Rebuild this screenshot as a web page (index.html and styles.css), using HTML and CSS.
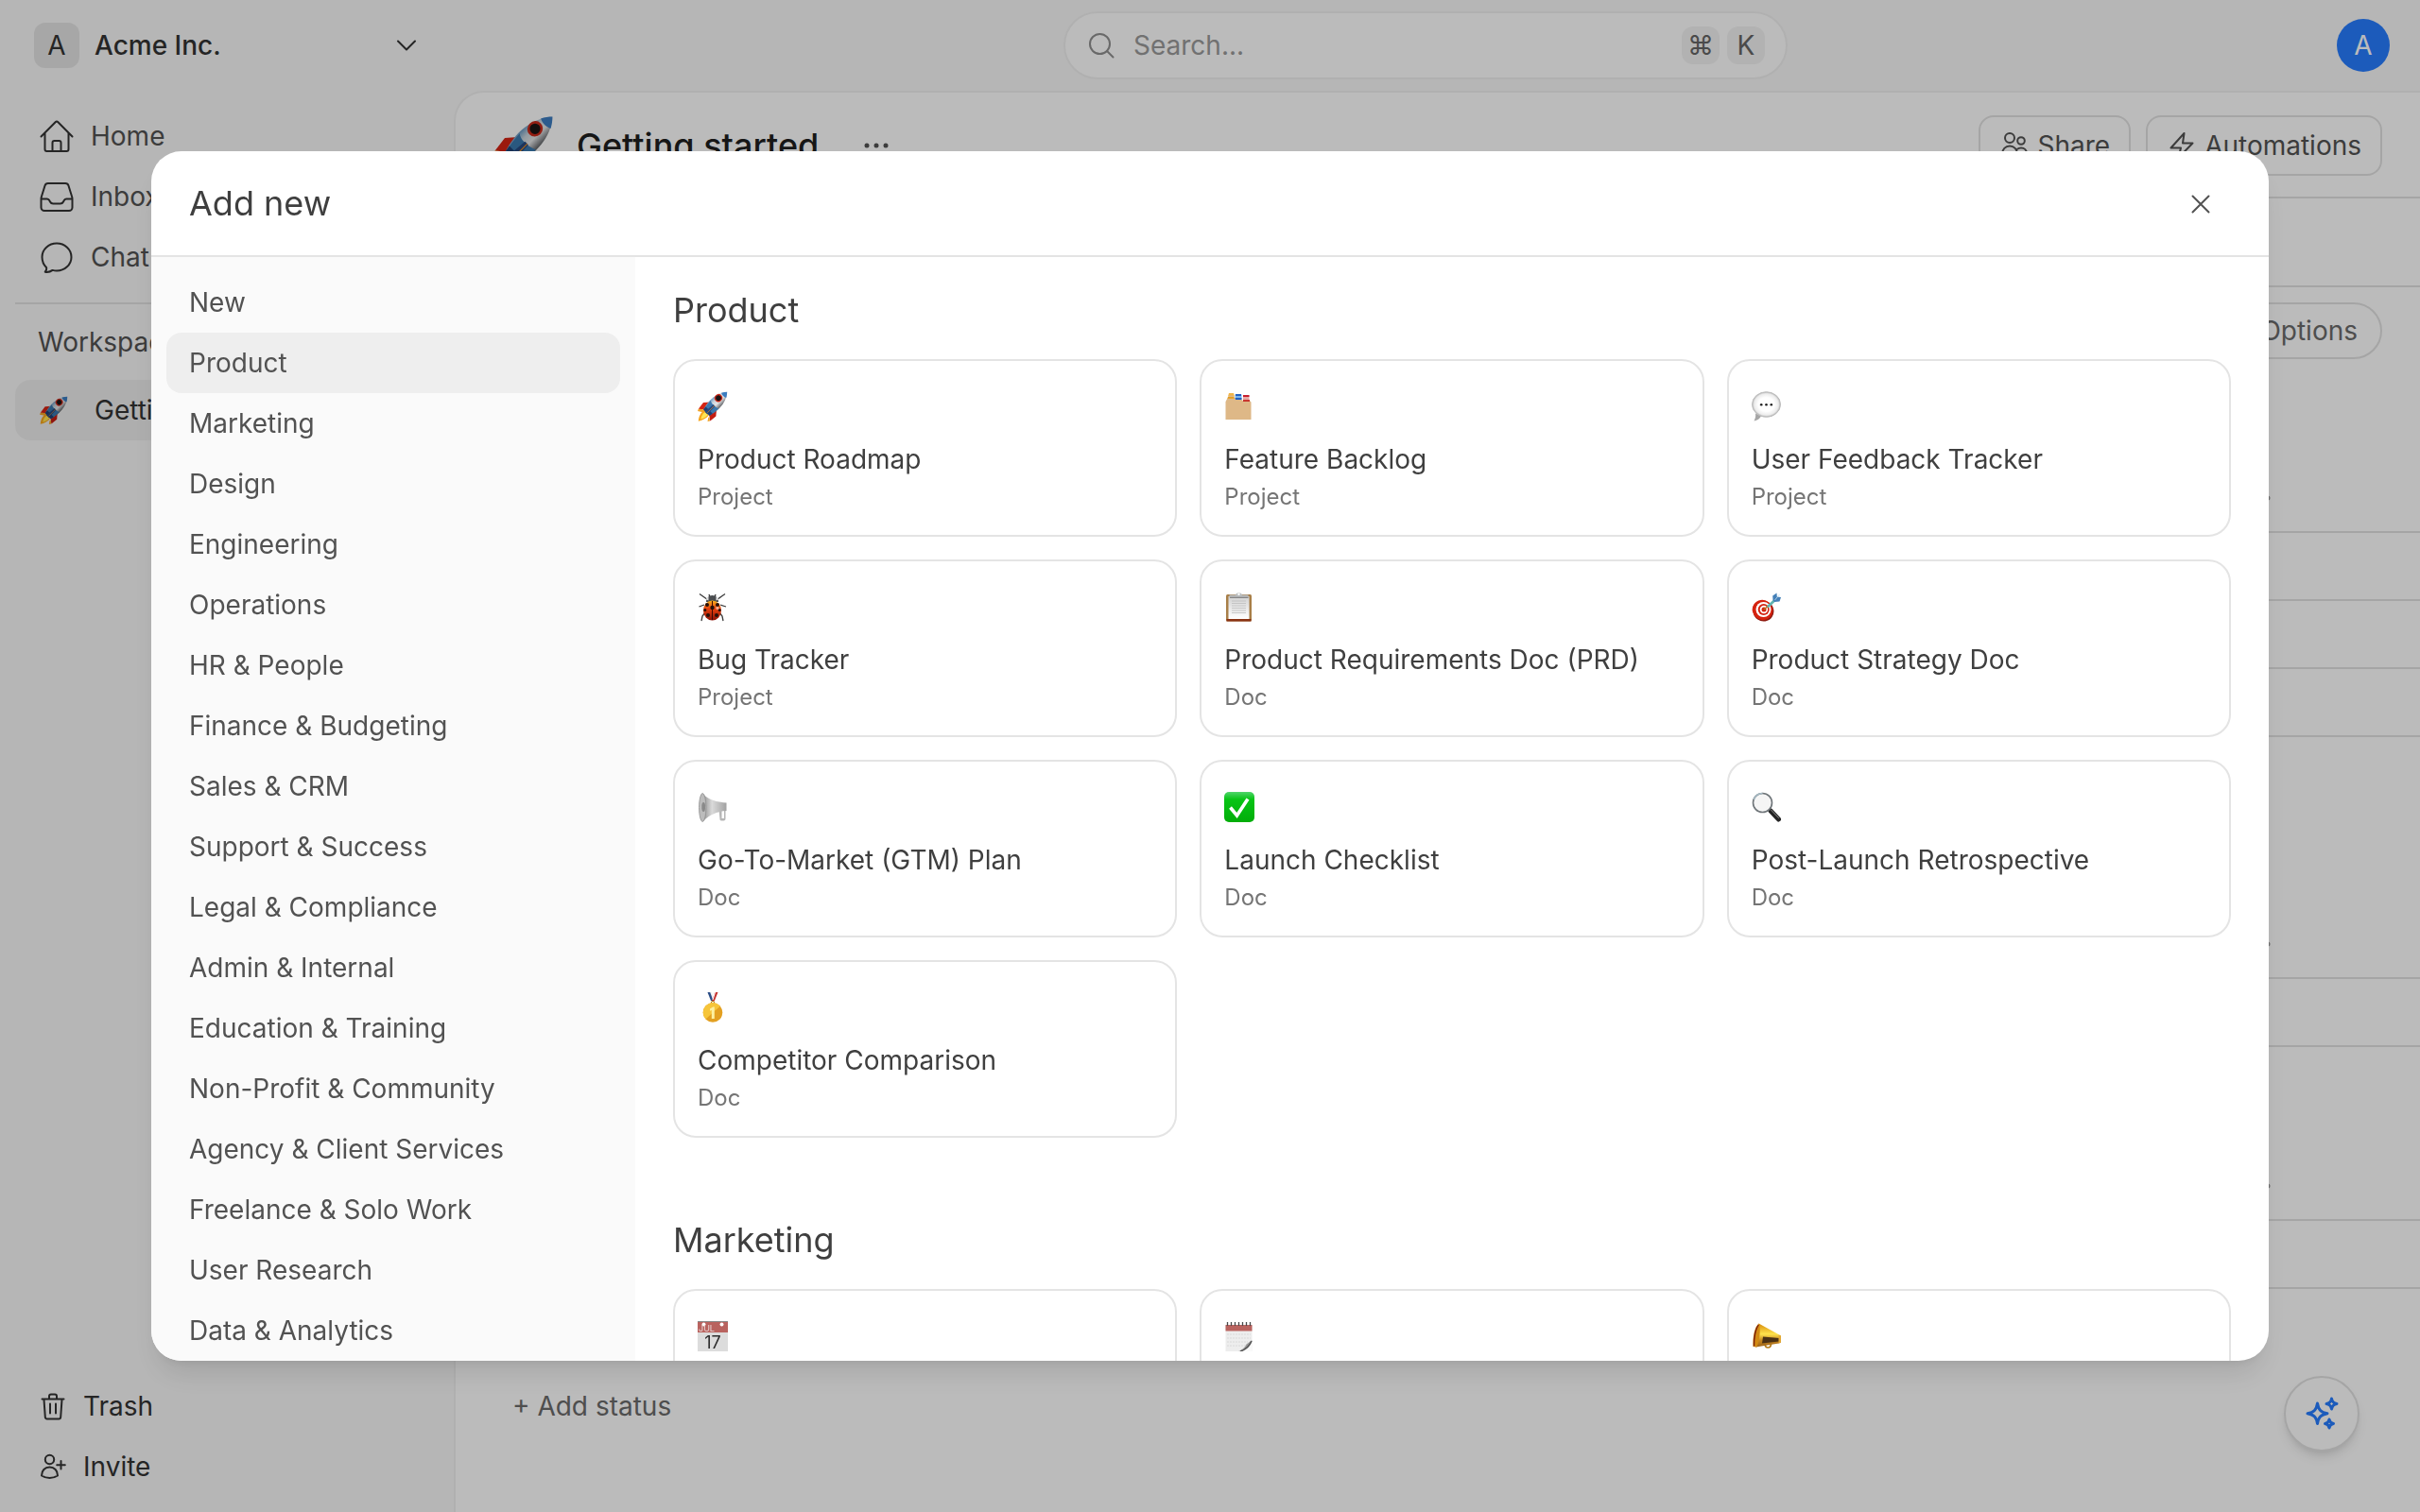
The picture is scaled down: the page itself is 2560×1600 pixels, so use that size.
FILE: index.html
```html
<!DOCTYPE html>
<html lang="en">
<head>
<meta charset="utf-8">
<title>Getting started</title>
<link rel="stylesheet" href="styles.css">
</head>
<body>
<svg class="defs" aria-hidden="true">
  <defs>
    <linearGradient id="g-hull" x1="0" y1="0" x2="1" y2="0"><stop offset="0" stop-color="#6d9cc4"/><stop offset=".3" stop-color="#c9d4dc"/><stop offset=".6" stop-color="#e4e6e8"/><stop offset="1" stop-color="#5d6064"/></linearGradient>
    <radialGradient id="g-bubble"><stop offset=".55" stop-color="#fff"/><stop offset=".85" stop-color="#ececec"/><stop offset="1" stop-color="#b4b4b4"/></radialGradient>
    <linearGradient id="g-bug" x1="0" y1="0" x2="0" y2="1"><stop offset="0" stop-color="#f6b51e"/><stop offset=".4" stop-color="#e8420f"/><stop offset="1" stop-color="#8c1207"/></linearGradient>
    <linearGradient id="g-horn" x1="0" y1="0" x2="1" y2="0"><stop offset="0" stop-color="#8d8d8d"/><stop offset=".4" stop-color="#dadada"/><stop offset="1" stop-color="#a2a2a2"/></linearGradient>
    <linearGradient id="g-green" x1="0" y1="0" x2="0" y2="1"><stop offset="0" stop-color="#4fd46a"/><stop offset=".25" stop-color="#07c415"/><stop offset="1" stop-color="#02ad0a"/></linearGradient>
    <linearGradient id="g-gold" x1="0" y1="0" x2="0" y2="1"><stop offset="0" stop-color="#d78b0a"/><stop offset=".45" stop-color="#ffe34d"/><stop offset=".7" stop-color="#c98b22"/><stop offset="1" stop-color="#9a5f16"/></linearGradient>
    <linearGradient id="g-paper" x1="0" y1="0" x2="0" y2="1"><stop offset="0" stop-color="#d2d2d2"/><stop offset="1" stop-color="#fff"/></linearGradient>

    <symbol id="e-rocket" viewBox="0 0 32 32">
      <path d="M13 11.500 6 12 .8 18.800l8 .7z" fill="#d42414"/>
      <path d="M.8 18.800l8 .7-2 3L0 21z" fill="#f0a429"/>
      <path d="M20 19l-.6 7.500-6.200 5-1.200-8z" fill="#c41d12"/>
      <path d="M12.500 27l.5 4.500-2.500.5.7-4z" fill="#f0a429"/>
      <path d="M7.500 20C3.500 22 1 26.500.8 31.700c4.500-.9 9-3.200 11.200-6.700z" fill="#f7a51c"/>
      <path d="M8 22c-2.500 1.500-4 4-4.500 7.500 3-.8 6-2.500 7.500-4.800z" fill="#ffe553"/>
      <g transform="rotate(45 16 16)">
        <path d="M11.500 25c-3.500-10-3-22 4.500-30.500C23.500 3 23.500 15 20.500 25z" fill="url(#g-hull)"/>
        <path d="M12.300-.5c1-1.900 2.200-3.500 3.700-5 1.500 1.500 2.700 3.100 3.700 5-2.300 1.200-5.100 1.200-7.400 0z" fill="#3c7dc0"/>
        <path d="M10 13c2 2 8 2 12.200 0-.1 4-.7 8-1.700 12h-9C10.700 21 10.100 17 10 13z" fill="#3a78ae"/>
        <path d="M10.800 21.500h10.500l-.8 4h-9z" fill="#1f4073"/>
        <path d="M15 14h2.500l.5 12h-4z" fill="#27497f"/>
        <path d="M16.700 14v11" stroke="#e08a26" stroke-width=".6"/>
        <ellipse cx="14" cy="5.500" rx="4" ry="4.200" fill="#c92a1b"/>
        <circle cx="14" cy="5.500" r="2.800" fill="#1c1414"/>
      </g>
    </symbol>

    <symbol id="e-dividers" viewBox="0 0 32 32">
      <path d="M4 5.500 5 2h5l1 3.500z" fill="#f1b548"/><path d="M11.500 3.500h7V9h-7z" fill="#7db5ea"/><path d="M12 3h6v2h-6zM11.500 7h7v2h-7z" fill="#2161c4"/>
      <path d="M20 4.500h6.500V10H20z" fill="#e8a8a4"/><path d="M20 4h6.500v2H20z" fill="#c81f2e"/>
      <path d="M1.500 11 5 4.500h5L11.500 8H18l1.500 2H27l1.500 1.500V30h-27z" fill="#deb887"/>
      <path d="M4 6h6l.8 1.800H3.500z" fill="#e59c1d"/><path d="M12 7.500h6V9h-6z" fill="#2161c4"/><path d="M20 9h7v2h-7z" fill="#c9362f"/>
    </symbol>

    <symbol id="e-bubble" viewBox="0 0 32 32">
      <path d="M4 23.500c.5 3-.2 5.500-1.500 8 3.700-.6 6-2.500 7.500-5.300z" fill="#a6a6a6"/>
      <ellipse cx="15.500" cy="14" rx="15" ry="13.300" fill="url(#g-bubble)" stroke="#bdbdbd" stroke-width="1"/>
      <circle cx="10.200" cy="14.300" r="1.300" fill="#222"/><circle cx="15.500" cy="14.300" r="1.300" fill="#222"/><circle cx="20.800" cy="14.300" r="1.300" fill="#222"/>
    </symbol>

    <symbol id="e-bug" viewBox="0 0 32 32">
      <path d="M10.500 8.500 2 2.500M20.500 8.500l8.500-6M7 14l-5.500 2M24 14l6 2M8 22l-3 4-1 5M23 22l3 4 1 5M12 3l1 3M19 3l-1 3" fill="none" stroke="#3a3a3a" stroke-width="1.300"/>
      <path d="M9 11c0-4 2.500-7 6.500-7S22 7 22 11z" fill="#4a4d50"/>
      <path d="M9 8.500c.3-1.700 1.200-2.600 2.500-3v4zM22 8.500c-.3-1.700-1.200-2.600-2.500-3v4z" fill="#e2e2e2"/>
      <ellipse cx="15.500" cy="20" rx="9.500" ry="10.500" fill="url(#g-bug)"/>
      <path d="M15.500 10v20" stroke="#3d0905" stroke-width="1"/>
      <g fill="#26100b"><circle cx="15.500" cy="17" r="2.200"/><circle cx="10" cy="14" r="2"/><circle cx="21" cy="14" r="2"/><circle cx="7.800" cy="19.500" r="1.500"/><circle cx="23.200" cy="19.500" r="1.500"/><circle cx="11" cy="25" r="2"/><circle cx="20" cy="25" r="2"/></g>
      <circle cx="21" cy="17.500" r="1.700" fill="#f4a98d"/>
    </symbol>

    <symbol id="e-clipboard" viewBox="0 0 32 32">
      <rect x="2" y="3" width="27" height="28.500" rx="1.500" fill="#a87f48"/>
      <path d="M2.500 29h26v2.500h-26z" fill="#8a3313"/>
      <path d="M4.500 5h22v24h-22z" fill="url(#g-paper)"/>
      <path d="M8 10h15M8 12.500h15M8 15h15M8 17.500h15M8 20h15M8 22.500h15" stroke="#bdbdbd" stroke-width=".8"/>
      <path d="M5.500 3.500H12c1-3 6-3 7 0h6.500v3.300h-20z" fill="#b9bcbd"/><path d="M6 6.300h19.500" stroke="#777" stroke-width="1"/>
      <circle cx="15.500" cy="2.800" r="1.200" fill="#fff"/>
    </symbol>

    <symbol id="e-dart" viewBox="0 0 32 32">
      <ellipse cx="12.500" cy="20.700" rx="11" ry="10.800" transform="rotate(35 12.500 20.700)" fill="#8d1a10"/>
      <ellipse cx="11.500" cy="19.500" rx="11" ry="10.500" transform="rotate(35 11.500 19.500)" fill="#d5220f"/>
      <circle cx="12.500" cy="19" r="8" fill="#fff"/><circle cx="12.700" cy="19" r="6" fill="#d5220f"/><circle cx="12.900" cy="19" r="4.200" fill="#fff"/><circle cx="13" cy="19" r="2.500" fill="#d5220f"/>
      <path d="M13 19l5-4.500" stroke="#b07b1c" stroke-width="1.400"/>
      <path d="M16 15.200 23 8.500l2.200 1.800-7.400 7z" fill="#5fb3b0"/>
      <path d="M22.500 9l-.3-4.500L26.500 1.500l.3 4 4.200.5-1.500 4.500-5.500.5z" fill="#4580b8"/><path d="M24.500 9l5-6" stroke="#bfe0f2" stroke-width=".8"/>
    </symbol>

    <symbol id="e-speaker" viewBox="0 0 32 32">
      <path d="M22 13h7.500v15.500c0 1-.8 2-2 2H25c-1 0-1.500-.7-1.500-1.700z" fill="#b6b6b6"/><path d="M25.500 20H28v8h-2.500z" fill="#fff"/>
      <path d="M5 1.500C11 8 20 11 30.500 11.500v8.500C20 20.500 11 25 5.500 31.500z" fill="url(#g-horn)"/>
      <ellipse cx="5.200" cy="16.500" rx="3.700" ry="15" fill="#bcbcbc" stroke="#909090" stroke-width=".8"/><ellipse cx="6.200" cy="16" rx="1.900" ry="5" fill="#8a8a8a"/>
    </symbol>

    <symbol id="e-check" viewBox="0 0 32 32">
      <rect x="0" y="0" width="32" height="32" rx="5" fill="url(#g-green)"/>
      <path d="M6.500 16.500 13.500 25 25 7.500" fill="none" stroke="#fff" stroke-width="3.600"/>
    </symbol>

    <symbol id="e-lens" viewBox="0 0 32 32">
      <path d="M20 20l8.500 9" stroke="#242424" stroke-width="5" stroke-linecap="round"/><path d="M20.500 19l8 8.500" stroke="#8a8a8a" stroke-width="1" stroke-linecap="round"/>
      <circle cx="11.500" cy="11.500" r="10" fill="#f5f5f5" stroke="#6f7579" stroke-width="1.600"/><path d="M2.500 8a9.500 9.500 0 0 1 9-6.500" fill="none" stroke="#a8bcc6" stroke-width="1.600"/>
    </symbol>

    <symbol id="e-medal" viewBox="0 0 32 32">
      <path d="M10.500 0h3.500l3 9h-3z" fill="#2b4d86"/><path d="M13.200 0h1.800l3 8-1.500 1z" fill="#f1f1f1"/><path d="M21.500 0H18l-3 9.500h2.700z" fill="#c63330"/><path d="M19 0h-1.200l-2.300 8h1z" fill="#fff"/>
      <circle cx="16" cy="11" r="1.600" fill="none" stroke="#b27b10" stroke-width="1"/>
      <circle cx="16" cy="21.500" r="10.300" fill="#e3a021"/><path d="M8 15a10.300 10.300 0 0 1 16-.2L16 21.500 8.500 28.500A10.300 10.300 0 0 1 8 15z" fill="#f6c53a"/>
      <path d="M13 17.500l3.200-2h1.600V28h-3V19l-1.800.8z" fill="#fdf0a1"/>
    </symbol>

    <symbol id="e-spiral" viewBox="0 0 32 32">
      <path d="M1.500 4h28v28h-28z" fill="#ededed"/><path d="M1.500 4h28v6.500h-28z" fill="#b9635f"/>
      <path d="M3 14h25M3 18h25M3 22h22M3 26h20" stroke="#d9d9d9" stroke-width="1" stroke-dasharray="2 1"/>
      <path d="M3.500 1v4M7.500 1v4M11.500 1v4M15.500 1v4M19.500 1v4M23.500 1v4M27.500 1v4" stroke="#4b4b4b" stroke-width="1.300"/>
      <path d="M29.500 20c-2 6-7 11-14.500 12 4-1.500 7-4 8.500-7.500z" fill="#9a9a9a"/><path d="M29.500 21v11H17c7-2 11-6 12.500-11z" fill="#fafafa"/><path d="M29 21c-2 5-6 9-12 11" fill="none" stroke="#555" stroke-width="1.600"/>
    </symbol>

    <symbol id="e-horn" viewBox="0 0 32 32">
      <path d="M14 23.500c0 6 6.500 6 6.500 0" fill="none" stroke="#b57a16" stroke-width="1.700"/>
      <path d="M7.500 2.500 31 15.500v7l-2 1L4 27.500z" fill="url(#g-gold)"/>
      <path d="M12 16.500 29 18v3.500l-18 2z" fill="#4a3014"/>
      <path d="M8 2.500C3 5 .8 18 1.500 27l4 .5C8.500 20 9.500 10 8 2.500z" fill="#d28a14"/><path d="M7.300 4C4 8 2.300 18 2.500 26.500" fill="none" stroke="#7c1f0c" stroke-width="1.300"/>
      <path d="M28.500 14.500l2.500 1v7l-2.500 1z" fill="#e3a936"/>
    </symbol>
  </defs>
</svg>

<div class="app">
  <header class="topbar">
    <button class="org" type="button">
      <span class="org-badge">A</span>
      <span class="org-name">Acme Inc.</span>
      <svg class="chevron" viewBox="0 0 28 28"><path d="M5 9.500 14 18.500 23 9.500"/></svg>
    </button>
    <div class="topbar-main">
      <label class="search">
        <svg class="search-icon" viewBox="0 0 28 28"><circle cx="12.500" cy="12.500" r="10.500"/><path d="M20 20l6.500 6.500"/></svg>
        <input type="search" placeholder="Search..." aria-label="Search">
        <kbd>⌘</kbd><kbd>K</kbd>
      </label>
      <button class="avatar" type="button">A</button>
    </div>
  </header>

  <div class="body">
    <aside class="sidebar">
      <nav class="nav">
        <a class="nav-item" href="#home"><svg class="icon" viewBox="0 0 40 40"><path d="M3.500 20.500 18.600 5.200a2 2 0 0 1 2.800 0L36.500 20.500M7.500 17v17a2 2 0 0 0 2 2h21a2 2 0 0 0 2-2V17M15.500 36v-9a2 2 0 0 1 2-2h5a2 2 0 0 1 2 2v9"/></svg>Home</a>
        <a class="nav-item" href="#inbox"><svg class="icon" viewBox="0 0 40 40"><path d="M3.500 22.500h6.200c1 0 1.800.5 2.300 1.300l1 1.700c.6 1.200 1.800 2 3.200 2h7.600c1.400 0 2.600-.8 3.200-2l1-1.700c.5-.8 1.300-1.300 2.300-1.300h6.200M3.500 22.500v9a3.500 3.500 0 0 0 3.500 3.500h26a3.500 3.500 0 0 0 3.500-3.500v-9c0-1-.2-1.800-.5-2.700L32.500 8.500A3.500 3.500 0 0 0 29.200 6H10.800a3.500 3.500 0 0 0-3.300 2.500L4 19.800c-.3.900-.5 1.700-.5 2.700z"/></svg>Inbox</a>
        <a class="nav-item" href="#chat"><svg class="icon" viewBox="0 0 40 40"><path d="M20 5.500c8.500 0 15.500 6.300 15.500 14.500S28.500 34.500 20 34.500c-1.600 0-3-.2-4.400-.6-2 1.500-5 2.300-7.900 1.800 1.200-1.300 1.800-2.900 1.500-4.500-2.900-2.800-4.700-6.700-4.700-11.200 0-8.200 7-14.500 15.500-14.500z"/></svg>Chat</a>
      </nav>
      <h2 class="side-heading">Workspaces</h2>
      <a class="nav-item space is-active" href="#getting-started"><svg class="emoji" viewBox="0 0 32 32"><use href="#e-rocket"/></svg>Getting started</a>
      <div class="side-foot">
        <a class="nav-item foot" href="#trash"><svg class="icon" viewBox="0 0 32 32"><path d="M4.500 8.500h23M12 8V5.500a2 2 0 0 1 2-2h4a2 2 0 0 1 2 2V8M6.500 9l1.300 18.500a2 2 0 0 0 2 1.900h12.400a2 2 0 0 0 2-1.900L25.500 9M13 13.500v10M19 13.500v10"/></svg>Trash</a>
        <a class="nav-item foot" href="#invite"><svg class="icon" viewBox="0 0 32 32"><circle cx="12.500" cy="8.500" r="4.700"/><path d="M12.500 16.500c-5 0-8.500 3.800-8.500 9 2.500 1.700 5.500 2.500 8.500 2.500s6-.8 8.500-2.500c0-5.200-3.500-9-8.500-9zM24.500 10v8.500M20.200 14.200h8.600"/></svg>Invite</a>
      </div>
    </aside>

    <main class="page">
      <div class="page-head">
        <svg class="page-emoji" viewBox="0 0 32 32"><use href="#e-rocket"/></svg>
        <h1>Getting started</h1>
        <button class="more" type="button" aria-label="More"><svg viewBox="0 0 26 6"><circle cx="3" cy="3" r="2.500"/><circle cx="13" cy="3" r="2.500"/><circle cx="23" cy="3" r="2.500"/></svg></button>
        <div class="page-actions">
          <button class="btn" type="button"><svg class="icon" viewBox="0 0 32 32"><circle cx="11" cy="8" r="5"/><circle cx="23" cy="11" r="3.800"/><path d="M3 25c0-5 3.500-8.500 8-8.500s8 3.500 8 8.500c-2.400 1.500-5.200 2.300-8 2.300S5.400 26.500 3 25zM19 19.800c1-.8 2.400-1.300 4-1.300 3.500 0 6 2.500 6 6-2 1.200-4.500 1.700-7 1.500"/></svg>Share</button>
          <button class="btn" type="button"><svg class="icon" viewBox="0 0 32 32"><path d="M18.500 3 4.500 18.500H15L12.500 29 27.500 13.500H17z"/></svg>Automations</button>
        </div>
      </div>
      <div class="tabs"></div>
      <div class="tools"><button class="pill" type="button">Options</button></div>
      <div class="groups">
        <section class="group">
          <div class="group-head"><svg viewBox="0 0 26 6"><circle cx="3" cy="3" r="2.500"/><circle cx="13" cy="3" r="2.500"/><circle cx="23" cy="3" r="2.500"/></svg></div>
          <div class="task"></div><div class="task"></div><div class="task"></div><div class="task blank"></div>
        </section>
        <section class="group">
          <div class="group-head"><svg viewBox="0 0 26 6"><circle cx="3" cy="3" r="2.500"/><circle cx="13" cy="3" r="2.500"/><circle cx="23" cy="3" r="2.500"/></svg></div>
          <div class="task"></div>
        </section>
        <section class="group">
          <div class="group-head"><svg viewBox="0 0 26 6"><circle cx="3" cy="3" r="2.500"/><circle cx="13" cy="3" r="2.500"/><circle cx="23" cy="3" r="2.500"/></svg></div>
          <div class="task"></div>
        </section>
      </div>
      <button class="add-status" type="button">+ Add status</button>
    </main>
  </div>

  <button class="assistant" type="button" aria-label="Assistant">
    <svg viewBox="0 0 40 40"><path d="M15.500 9c1.200 7 3.500 9.500 10.500 10.800-7 1.300-9.300 3.700-10.500 10.700C14.300 23.500 12 21.100 5 19.800 12 18.500 14.300 16 15.500 9zM30.500 4c.6 3.600 1.900 4.900 5.500 5.500-3.600.6-4.900 1.900-5.500 5.500-.6-3.600-1.900-4.900-5.500-5.500 3.600-.6 4.900-1.900 5.500-5.500zM28 26c.5 2.900 1.600 4 4.500 4.500-2.900.5-4 1.600-4.500 4.500-.5-2.900-1.600-4-4.500-4.500 2.900-.5 4-1.600 4.500-4.500z"/></svg>
  </button>
</div>

<div class="overlay">
  <div class="modal" role="dialog" aria-modal="true" aria-labelledby="modal-title">
    <header class="modal-head">
      <h2 id="modal-title">Add new</h2>
      <button class="close" type="button" aria-label="Close"><svg viewBox="0 0 32 32"><path d="M7.500 8.500l17 17M24.500 8.500l-17 17"/></svg></button>
    </header>
    <div class="modal-body">
      <nav class="cats">
        <a href="#new">New</a>
        <a class="is-active" href="#product">Product</a>
        <a href="#marketing">Marketing</a>
        <a href="#design">Design</a>
        <a href="#engineering">Engineering</a>
        <a href="#operations">Operations</a>
        <a href="#hr">HR &amp; People</a>
        <a href="#finance">Finance &amp; Budgeting</a>
        <a href="#sales">Sales &amp; CRM</a>
        <a href="#support">Support &amp; Success</a>
        <a href="#legal">Legal &amp; Compliance</a>
        <a href="#admin">Admin &amp; Internal</a>
        <a href="#education">Education &amp; Training</a>
        <a href="#nonprofit">Non-Profit &amp; Community</a>
        <a href="#agency">Agency &amp; Client Services</a>
        <a href="#freelance">Freelance &amp; Solo Work</a>
        <a href="#research">User Research</a>
        <a href="#data">Data &amp; Analytics</a>
      </nav>
      <div class="templates">
        <section class="set">
          <h3>Product</h3>
          <div class="cards">
            <button class="card" type="button"><svg class="emoji" viewBox="0 0 32 32"><use href="#e-rocket"/></svg><span class="name">Product Roadmap</span><span class="kind">Project</span></button>
            <button class="card" type="button"><svg class="emoji" viewBox="0 0 32 32"><use href="#e-dividers"/></svg><span class="name">Feature Backlog</span><span class="kind">Project</span></button>
            <button class="card" type="button"><svg class="emoji" viewBox="0 0 32 32"><use href="#e-bubble"/></svg><span class="name">User Feedback Tracker</span><span class="kind">Project</span></button>
            <button class="card" type="button"><svg class="emoji" viewBox="0 0 32 32"><use href="#e-bug"/></svg><span class="name">Bug Tracker</span><span class="kind">Project</span></button>
            <button class="card" type="button"><svg class="emoji" viewBox="0 0 32 32"><use href="#e-clipboard"/></svg><span class="name">Product Requirements Doc (PRD)</span><span class="kind">Doc</span></button>
            <button class="card" type="button"><svg class="emoji" viewBox="0 0 32 32"><use href="#e-dart"/></svg><span class="name">Product Strategy Doc</span><span class="kind">Doc</span></button>
            <button class="card" type="button"><svg class="emoji" viewBox="0 0 32 32"><use href="#e-speaker"/></svg><span class="name">Go-To-Market (GTM) Plan</span><span class="kind">Doc</span></button>
            <button class="card" type="button"><svg class="emoji" viewBox="0 0 32 32"><use href="#e-check"/></svg><span class="name">Launch Checklist</span><span class="kind">Doc</span></button>
            <button class="card" type="button"><svg class="emoji" viewBox="0 0 32 32"><use href="#e-lens"/></svg><span class="name">Post-Launch Retrospective</span><span class="kind">Doc</span></button>
            <button class="card" type="button"><svg class="emoji" viewBox="0 0 32 32"><use href="#e-medal"/></svg><span class="name">Competitor Comparison</span><span class="kind">Doc</span></button>
          </div>
        </section>
        <section class="set">
          <h3>Marketing</h3>
          <div class="cards">
            <button class="card" type="button" aria-label="Calendar">
              <svg class="emoji" viewBox="0 0 32 32"><path d="M0 0h32v32H0z" fill="#dcdcdc"/><path d="M0 0h32v12H0z" fill="#b9635f"/><path d="M0 .500h32" stroke="#888" stroke-width="1"/><circle cx="6.500" cy="3.500" r="2" fill="#fff"/><circle cx="25.500" cy="3.500" r="2" fill="#fff"/><text class="cal-month" x="1" y="11">JUL</text><text class="cal-day" x="16" y="29" text-anchor="middle">17</text></svg>
            </button>
            <button class="card" type="button" aria-label="Planner"><svg class="emoji" viewBox="0 0 32 32"><use href="#e-spiral"/></svg></button>
            <button class="card" type="button" aria-label="Campaign"><svg class="emoji" viewBox="0 0 32 32"><use href="#e-horn"/></svg></button>
          </div>
        </section>
      </div>
    </div>
  </div>
</div>
</body>
</html>
```
FILE: styles.css
```css
* { box-sizing: border-box; }

body {
  margin: 0;
  font: 400 28px/40px Inter, "Liberation Sans", sans-serif;
  color: #525252;
  background: #f8f8f8;
}

h1, h2, h3 { margin: 0; font-weight: 400; }

button, input {
  font: inherit;
  color: inherit;
  background: none;
  border: 0;
  padding: 0;
  margin: 0;
}

a { color: inherit; text-decoration: none; }

.defs { position: absolute; width: 0; height: 0; }

.icon, .chevron, .search-icon, .close svg {
  fill: none;
  stroke: currentColor;
  stroke-width: 2;
  stroke-linecap: round;
  stroke-linejoin: round;
  flex: none;
}

.emoji { width: 32px; height: 32px; flex: none; display: block; }

.app {
  height: 100vh;
  display: flex;
  flex-direction: column;
  overflow: hidden;
}

/* Top bar */
.topbar { display: flex; flex: none; height: 96px; }

.org {
  width: 480px;
  display: flex;
  align-items: center;
  gap: 16px;
  padding: 0 36px;
  color: #333;
  text-align: left;
}
.org-badge {
  width: 48px;
  height: 48px;
  line-height: 48px;
  border-radius: 12px;
  background: #e4e4e4;
  text-align: center;
}
.org-name { flex: 1; font-weight: 500; }
.chevron { width: 28px; height: 28px; }

.topbar-main {
  flex: 1;
  display: grid;
  grid-template-columns: 1fr 766px 1fr;
  align-items: center;
  padding: 0 32px 0 8px;
}
.search {
  grid-column: 2;
  height: 72px;
  display: flex;
  align-items: center;
  gap: 8px;
  padding: 0 22px 0 24px;
  border: 2px solid #f1f1f1;
  border-radius: 36px;
  background: #fff;
}
.search-icon { width: 28px; height: 28px; color: #8f8f8f; }
.search input { flex: 1; min-width: 0; padding-left: 12px; outline: 0; }
.search input::placeholder { color: #9a9a9a; opacity: 1; }
kbd {
  width: 40px;
  height: 40px;
  border-radius: 12px;
  background: #f3f3f3;
  color: #666;
  font-family: inherit;
  font-size: 28px;
  text-align: center;
}
.avatar {
  justify-self: end;
  width: 56px;
  height: 56px;
  border-radius: 50%;
  background: #277dff;
  color: #fff;
}

/* Sidebar */
.body { flex: 1; display: flex; min-height: 0; }

.sidebar {
  width: 480px;
  flex: none;
  display: flex;
  flex-direction: column;
  padding: 16px;
}
.nav { padding-bottom: 16px; border-bottom: 2px solid #e2e2e2; }
.nav-item {
  display: flex;
  align-items: center;
  gap: 16px;
  height: 64px;
  padding: 0 24px;
  border-radius: 16px;
}
.nav .icon { width: 40px; height: 40px; color: #333; }
.side-heading {
  padding: 8px 24px 0;
  margin-bottom: 8px;
  font-size: 28px;
  line-height: 64px;
}
.space { gap: 28px; padding: 0 26px; }
.space .emoji { width: 30px; height: 30px; }
.space.is-active { background: #eee; color: #333; }
.side-foot { margin-top: auto; color: #333; }
.foot .icon { width: 32px; height: 32px; }

/* Page behind the dialog */
.page {
  flex: 1;
  display: flex;
  flex-direction: column;
  border: 2px solid #f1f1f1;
  border-right: 0;
  border-bottom: 0;
  border-top-left-radius: 32px;
  background: #fff;
}
.page-head {
  display: flex;
  align-items: center;
  height: 112px;
  padding: 2px 40px 0;
  border-bottom: 2px solid #e2e2e2;
}
.page-emoji { width: 64px; height: 64px; }
.page-head h1 { margin-left: 24px; font-size: 36px; line-height: 48px; font-weight: 500; color: #1f1f1f; }
.more { margin-left: 48px; }
.more svg, .group-head svg { display: block; width: 26px; height: 6px; fill: #525252; }
.page-actions { margin-left: auto; display: flex; gap: 16px; }
.btn {
  display: flex;
  align-items: center;
  gap: 8px;
  height: 64px;
  padding: 0 20px;
  border: 2px solid #e2e2e2;
  border-radius: 16px;
}
.btn .icon { width: 32px; height: 32px; }
.tabs { height: 94px; border-bottom: 2px solid #e2e2e2; }
.tools { display: flex; justify-content: flex-end; padding: 16px 40px; margin-bottom: 96px; }
.pill {
  height: 60px;
  padding: 0 24px;
  border: 2px solid #e2e2e2;
  border-radius: 30px;
  color: #6b6b6b;
}
.group { margin-bottom: 112px; }
.group:last-child { margin-bottom: 92px; }
.group-head, .task { height: 72px; border-bottom: 2px solid #e2e2e2; }
.task.blank { border: 0; }
.group-head {
  display: flex;
  align-items: center;
  justify-content: flex-end;
  padding-right: 158px;
}
.group-head svg { fill: #999; }
.add-status { align-self: flex-start; height: 64px; padding: 0 60px; color: #6b6b6b; }

.assistant {
  position: fixed;
  right: 64px;
  bottom: 64px;
  width: 80px;
  height: 80px;
  display: grid;
  place-items: center;
  border: 2px solid #e2e2e2;
  border-radius: 50%;
  background: #fff;
  box-shadow: 0 8px 12px -2px rgba(0, 0, 0, .1), 0 4px 8px -4px rgba(0, 0, 0, .1);
}
.assistant svg {
  width: 40px;
  height: 40px;
  fill: none;
  stroke: #277dff;
  stroke-width: 3;
  stroke-linejoin: round;
}

/* Dialog */
.overlay {
  position: fixed;
  inset: 0;
  display: flex;
  padding: 160px;
  background: rgba(0, 0, 0, .267);
}
.modal {
  flex: 1;
  display: flex;
  flex-direction: column;
  min-width: 0;
  overflow: hidden;
  border-radius: 32px;
  background: #fff;
  box-shadow: 0 20px 30px -6px rgba(0, 0, 0, .1), 0 8px 12px -8px rgba(0, 0, 0, .1);
}
.modal-head {
  display: flex;
  flex: none;
  align-items: center;
  justify-content: space-between;
  height: 112px;
  padding: 0 40px;
  border-bottom: 2px solid #e4e4e4;
}
.modal-head h2, .set h3 { font-size: 36px; line-height: 48px; color: #3f3f3f; }
.close { width: 64px; height: 64px; display: grid; place-items: center; }
.close svg { width: 32px; height: 32px; }

.modal-body { flex: 1; display: flex; min-height: 0; }
.cats {
  width: 512px;
  flex: none;
  padding: 16px;
  overflow: hidden;
  background: #fafafa;
}
.cats a { display: block; padding: 12px 24px; border-radius: 16px; }
.cats .is-active { background: #eee; }

.templates { flex: 1; padding: 32px 40px; overflow: hidden; }
.set { margin-bottom: 84px; }
.set h3 { margin-bottom: 28px; }
.cards { display: grid; grid-template-columns: repeat(3, 1fr); gap: 24px; }
.card {
  display: flex;
  flex-direction: column;
  align-items: flex-start;
  height: 188px;
  padding: 32px 24px 0;
  border: 2px solid #e4e4e4;
  border-radius: 24px;
  text-align: left;
}
.card .name { margin-top: 20px; color: #3f3f3f; }
.card .kind { margin-top: 2px; font-size: 24px; line-height: 36px; color: #757575; }
.cal-month { font-size: 9px; fill: #e8d6d5; }
.cal-day { font-size: 18px; fill: #2d2d2d; }
```
